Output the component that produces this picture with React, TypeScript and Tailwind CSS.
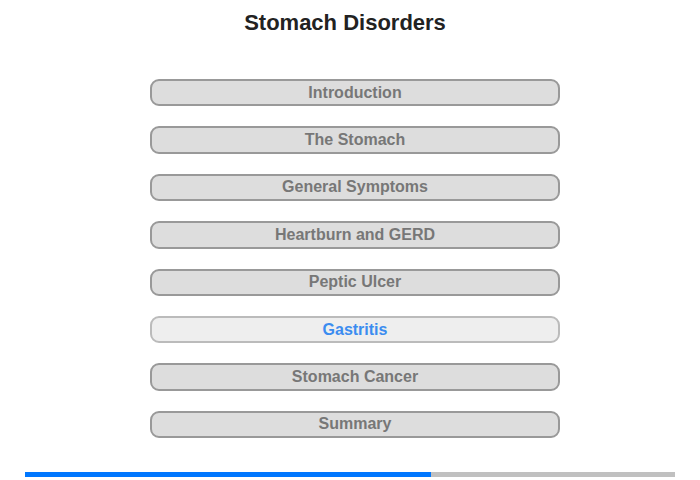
import React from 'react';

const sections = [
  'Introduction',
  'The Stomach',
  'General Symptoms',
  'Heartburn and GERD',
  'Peptic Ulcer',
  'Gastritis',
  'Stomach Cancer',
  'Summary',
];

const active = 'Gastritis';

export default function App() {
  return (
    <div className="w-[700px] h-[480px] bg-white font-['Liberation_Sans',Arial,sans-serif] flex flex-col">
      <h1 className="pt-[10px] pr-[10px] text-center text-[22px] leading-[26px] font-bold text-[#222]">
        Stomach Disorders
      </h1>

      {/* Menu */}
      <div className="mt-[43px] pl-[150px] flex flex-col items-start gap-[20px]">
        {sections.map(title => {
          const isActive = title === active;
          return (
            <button
              key={title}
              className={`w-[410px] h-[27.4px] rounded-[9px] border-2 text-[16px] font-bold leading-none ${
                isActive
                  ? 'bg-[#eeeeee] border-[#bbbbbb] text-[#3b8cf0]'
                  : 'bg-[#dddddd] border-[#999999] text-[#777777]'
              }`}
            >
              {title}
            </button>
          );
        })}
      </div>

      {/* Progress */}
      <div className="mt-auto mb-[3px] mx-[25px] h-[5px] flex">
        <div className="w-[406px] bg-[#0077ff]" />
        <div className="flex-1 bg-[#c0c0c0]" />
      </div>
    </div>
  );
}
